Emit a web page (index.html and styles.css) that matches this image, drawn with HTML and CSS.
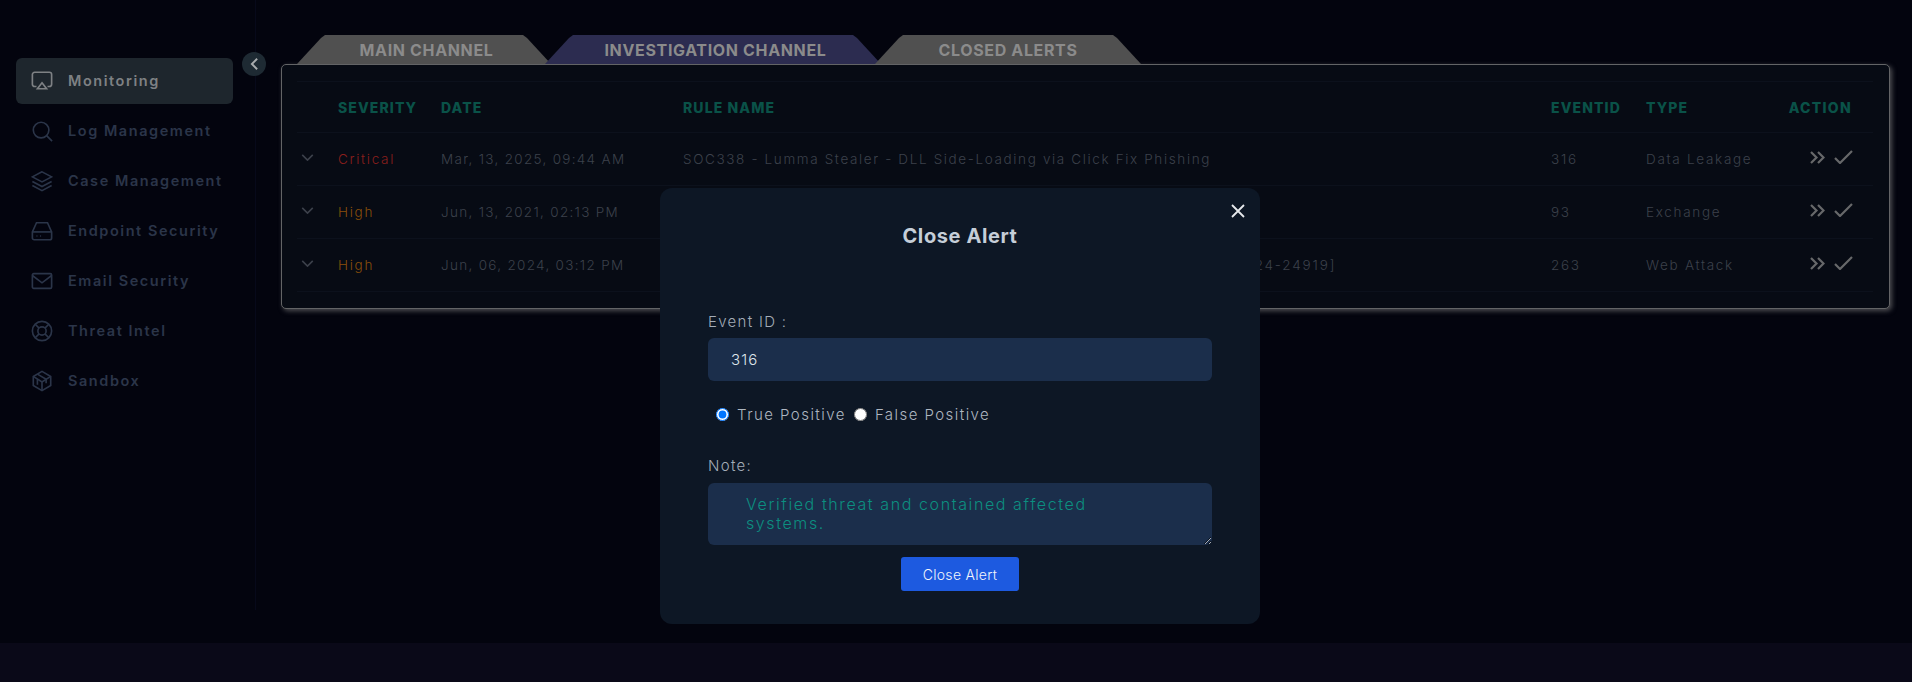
FILE: index.html
```html
<!DOCTYPE html>
<html lang="en">
<head>
    <meta charset="UTF-8">
    <title>Monitoring</title>
    <link rel="stylesheet" href="styles.css">
</head>
<body>
    <div class="app">
        <aside class="sidebar">
            <button class="collapse" type="button">
                <svg viewBox="0 0 10 16"><path d="M8 2L2 8l6 6"/></svg>
            </button>
            <a class="nav-item active">
                <svg viewBox="0 0 24 24"><path d="M6 18H4a2.500 2.500 0 0 1-2.500-2.500V5A2.500 2.500 0 0 1 4 2.500h16A2.500 2.500 0 0 1 22.500 5v10.500A2.500 2.500 0 0 1 20 18h-2"/><path d="M12 14l5 6.500H7z"/></svg>
                Monitoring
            </a>
            <a class="nav-item">
                <svg viewBox="0 0 24 24"><circle cx="11" cy="11" r="8.500"/><path d="M23 23l-6-6"/></svg>
                Log Management
            </a>
            <a class="nav-item">
                <svg viewBox="0 0 24 24"><path d="M12 2L1.500 7.500 12 13l10.500-5.500z"/><path d="M1.500 12.500L12 18l10.500-5.500"/><path d="M1.500 17L12 22.500 22.500 17"/></svg>
                Case Management
            </a>
            <a class="nav-item">
                <svg viewBox="0 0 24 24"><path d="M1.500 13h21"/><path d="M6 3h12l4.500 10v6.500a2 2 0 0 1-2 2h-17a2 2 0 0 1-2-2V13z"/><path d="M6 17.500h1M10 17.500h1"/></svg>
                Endpoint Security
            </a>
            <a class="nav-item">
                <svg viewBox="0 0 24 24"><rect x="1.500" y="4" width="21" height="16" rx="1.500"/><path d="M1.500 6L12 14 22.500 6"/></svg>
                Email Security
            </a>
            <a class="nav-item">
                <svg viewBox="0 0 24 24"><circle cx="12" cy="12" r="10.500"/><circle cx="12" cy="12" r="4.500"/><path d="M4.600 4.600l4.200 4.200M15.200 15.200l4.200 4.200M19.400 4.600l-4.200 4.200M8.800 15.200l-4.200 4.200"/></svg>
                Threat Intel
            </a>
            <a class="nav-item">
                <svg viewBox="0 0 24 24"><path d="M12 1.500l9.500 5.500v10L12 22.500 2.500 17V7z"/><path d="M12 22.500V13M2.500 7l9.500 6 9.500-6"/><path d="M7 4.500l9.500 5.500v4.500M7 10v6"/></svg>
                Sandbox
            </a>
        </aside>

        <main class="content">
            <div class="tabs">
                <div class="tab tab-main">MAIN CHANNEL</div>
                <div class="tab tab-active">INVESTIGATION CHANNEL</div>
                <div class="tab tab-closed">CLOSED ALERTS</div>
            </div>
            <div class="panel">
                <table class="alerts">
                    <colgroup>
                        <col class="col-toggle">
                        <col class="col-severity">
                        <col class="col-date">
                        <col class="col-rule">
                        <col class="col-event">
                        <col class="col-type">
                        <col class="col-action">
                    </colgroup>
                    <thead>
                        <tr>
                            <th></th>
                            <th>SEVERITY</th>
                            <th>DATE</th>
                            <th>RULE NAME</th>
                            <th>EVENTID</th>
                            <th>TYPE</th>
                            <th class="action-head">ACTION</th>
                        </tr>
                    </thead>
                    <tbody>
                        <tr>
                            <td><svg class="chevron" viewBox="0 0 14 8"><path d="M1 1l6 6 6-6"/></svg></td>
                            <td class="critical">Critical</td>
                            <td class="date">Mar, 13, 2025, 09:44 AM</td>
                            <td class="rule">SOC338 - Lumma Stealer - DLL Side-Loading via Click Fix Phishing</td>
                            <td>316</td>
                            <td>Data Leakage</td>
                            <td class="actions">
                                <svg viewBox="0 0 15 13"><path d="M1 1l5.500 5.500L1 12M8 1l5.500 5.500L8 12"/></svg>
                                <svg viewBox="0 0 19 14"><path d="M1 8l5 5L18 1"/></svg>
                            </td>
                        </tr>
                        <tr>
                            <td><svg class="chevron" viewBox="0 0 14 8"><path d="M1 1l6 6 6-6"/></svg></td>
                            <td class="high">High</td>
                            <td class="date">Jun, 13, 2021, 02:13 PM</td>
                            <td class="rule">SOC141 - Phishing URL Detected</td>
                            <td>93</td>
                            <td>Exchange</td>
                            <td class="actions">
                                <svg viewBox="0 0 15 13"><path d="M1 1l5.500 5.500L1 12M8 1l5.500 5.500L8 12"/></svg>
                                <svg viewBox="0 0 19 14"><path d="M1 8l5 5L18 1"/></svg>
                            </td>
                        </tr>
                        <tr>
                            <td><svg class="chevron" viewBox="0 0 14 8"><path d="M1 1l6 6 6-6"/></svg></td>
                            <td class="high">High</td>
                            <td class="date">Jun, 06, 2024, 03:12 PM</td>
                            <td class="rule rule-long">SOC287 - Arbitrary File Read on Checkpoint Security Gateway [CVE-2024-24919]</td>
                            <td>263</td>
                            <td>Web Attack</td>
                            <td class="actions">
                                <svg viewBox="0 0 15 13"><path d="M1 1l5.500 5.500L1 12M8 1l5.500 5.500L8 12"/></svg>
                                <svg viewBox="0 0 19 14"><path d="M1 8l5 5L18 1"/></svg>
                            </td>
                        </tr>
                    </tbody>
                </table>
            </div>
        </main>
    </div>

    <div class="modal">
        <button class="modal-close" type="button">
            <svg viewBox="0 0 14 14"><path d="M1 1l12 12M13 1L1 13"/></svg>
        </button>
        <h2>Close Alert</h2>
        <label class="field-label" for="eventId">Event ID :</label>
        <input class="field" id="eventId" type="text" value="316">
        <div class="radios">
            <input type="radio" id="truePositive" name="verdict" checked>
            <label for="truePositive">True Positive</label>
            <input type="radio" id="falsePositive" name="verdict">
            <label for="falsePositive">False Positive</label>
        </div>
        <label class="field-label note-label" for="note">Note:</label>
        <textarea class="field note" id="note">Verified threat and contained affected
systems.</textarea>
        <button class="submit" type="button">Close Alert</button>
    </div>
</body>
</html>
```

FILE: styles.css
```css
* {
    box-sizing: border-box;
}

html, body {
    height: 100%;
}

body {
    margin: 0;
    background: #0a0918; /* strip below the backdrop */
    font-family: Inter, "Liberation Sans", sans-serif;
    overflow: hidden;
}

.app {
    display: flex;
    height: 643px;
    background: #03040e;
}

/* Sidebar */
.sidebar {
    position: relative;
    width: 256px;
    height: 610px;
    padding: 58px 22px 0 16px;
    border-right: 1px solid #07091a;
    flex-shrink: 0;
}

.collapse {
    position: absolute;
    top: 52px;
    left: 242px;
    display: flex;
    align-items: center;
    justify-content: center;
    width: 24px;
    height: 24px;
    padding: 0;
    border: none;
    border-radius: 50%;
    background: #1e2a33;
}

.collapse svg {
    width: 9px;
    height: 14px;
    fill: none;
    stroke: #a9acae;
    stroke-width: 2.200;
}

.nav-item {
    display: flex;
    align-items: center;
    gap: 15px;
    height: 46px;
    margin-bottom: 4px;
    padding: 0 0 1px 15px;
    border-radius: 6px;
    color: #2b3549;
    font-size: 14.500px;
    font-weight: 600;
    letter-spacing: 1.550px;
}

.nav-item svg {
    width: 22px;
    height: 22px;
    fill: none;
    stroke: currentColor;
    stroke-width: 1.800;
    flex-shrink: 0;
}

.nav-item.active {
    background: #1e262d;
    color: #7e8184;
}

/* Tabs and table */
.content {
    flex: 1;
    padding: 35px 22px 0 25px;
}

.tabs {
    display: flex;
    height: 29px;
    margin-left: 16px;
}

.tab {
    display: flex;
    align-items: center;
    justify-content: center;
    height: 29px;
    background: #505050;
    color: #8b8b8b;
    font-size: 16px;
    font-weight: 700;
    letter-spacing: 0.650px;
    clip-path: polygon(0 100%, 24px 3px, 28px 0, calc(100% - 28px) 0, calc(100% - 24px) 3px, 100% 100%);
}

.tab-main {
    width: 254px;
    padding-left: 5px;
}

.tab-active {
    width: 336px;
    margin-left: -6px;
    padding-left: 5px;
    background: #2c2c50;
}

.tab-closed {
    width: 266px;
    margin-left: -6px;
}

.panel {
    height: 245px;
    padding: 16px 15px 0;
    border: 1px solid #636466;
    border-radius: 5px;
    background: #070b14;
    box-shadow: 2px 2px 5px rgba(140, 140, 140, 0.55);
}

.alerts {
    width: 1576px;
    border-collapse: collapse;
    table-layout: fixed;
}

.col-toggle { width: 41px; }
.col-severity { width: 103px; }
.col-date { width: 242px; }
.col-rule { width: 868px; }
.col-event { width: 95px; }
.col-type { width: 111px; }
.col-action { width: 116px; }

.alerts th {
    height: 51px;
    padding: 0;
    border-top: 1px solid #0c111c;
    border-bottom: 1px solid #0c111c;
    color: #0a5248;
    font-size: 14px;
    font-weight: 800;
    letter-spacing: 1.100px;
    text-align: left;
}

.alerts td {
    height: 53px;
    padding: 0;
    border-bottom: 1px solid #0c111c;
    color: #3c414b;
    font-size: 13.500px;
    font-weight: 300;
    letter-spacing: 1.700px;
    white-space: nowrap;
}

.alerts td.date {
    letter-spacing: 1.300px;
}

.alerts td.rule {
    letter-spacing: 1.630px;
}

.alerts td.rule-long {
    letter-spacing: 1.830px;
}

.alerts th.action-head {
    padding-right: 21px;
    text-align: right;
    letter-spacing: 1.300px;
}

.alerts td.critical {
    color: #8a1f1c;
}

.alerts td.high {
    color: #8a4f0a;
}

.chevron {
    display: block;
    width: 13px;
    height: 7px;
    margin: -3px 0 0 4px;
    fill: none;
    stroke: #3c414b;
    stroke-width: 1.800;
}

.alerts td.actions {
    padding-right: 20px;
    text-align: right;
}

.actions svg {
    fill: none;
    stroke: #67686a;
    stroke-width: 2.200;
    vertical-align: 2px;
}

.actions svg:first-child {
    width: 15px;
    height: 13px;
    margin-right: 4px;
}

.actions svg:last-child {
    width: 19px;
    height: 14px;
}

/* Modal */
.modal {
    position: absolute;
    top: 188px;
    left: 660px;
    display: flex;
    flex-direction: column;
    width: 600px;
    height: 436px;
    padding: 37px 48px 0;
    border-radius: 12px;
    background: #0d1725;
}

.modal h2 {
    margin: 0 0 66px;
    color: #c5ced8;
    font-size: 20px;
    font-weight: 700;
    letter-spacing: 0.600px;
    line-height: 22px;
    text-align: center;
}

.modal-close {
    position: absolute;
    top: 15px;
    right: 14px;
    width: 16px;
    height: 16px;
    padding: 1px;
    border: none;
    background: none;
}

.modal-close svg {
    display: block;
    fill: none;
    stroke: #e6e9ec;
    stroke-width: 1.800;
}

.field-label {
    margin-bottom: 8px;
    color: #a4adb8;
    font-size: 15px;
    font-weight: 300;
    letter-spacing: 1.300px;
    line-height: 17px;
}

.field {
    width: 504px;
    border: none;
    border-radius: 6px;
    background: #1b2e4b;
    font-family: inherit;
    outline: none;
}

input.field {
    height: 43px;
    padding: 0 23px;
    color: #dfe5ec;
    font-size: 15px;
    font-weight: 300;
    letter-spacing: 1.100px;
}

.radios {
    display: flex;
    align-items: center;
    height: 19px;
    margin: 24px 0 33px 8px;
    color: #aeb6c0;
    font-size: 15px;
    font-weight: 300;
    letter-spacing: 1.450px;
}

.radios input {
    width: 13px;
    height: 13px;
    margin: 0 8px 0 0;
}

.radios label {
    margin-right: 8px;
}

.note-label {
    margin-bottom: 9px;
}

.note {
    height: 62px;
    padding: 12px 38px 0;
    color: #0c8f80;
    font-size: 16px;
    font-weight: 300;
    letter-spacing: 1.600px;
    line-height: 19px;
}

.submit {
    align-self: center;
    width: 118px;
    height: 34px;
    margin-top: 12px;
    border: none;
    border-radius: 3px;
    background: #1d5ae0;
    color: #f2f5fb;
    font-family: inherit;
    font-size: 14px;
    font-weight: 300;
    letter-spacing: 0.300px;
}
```
